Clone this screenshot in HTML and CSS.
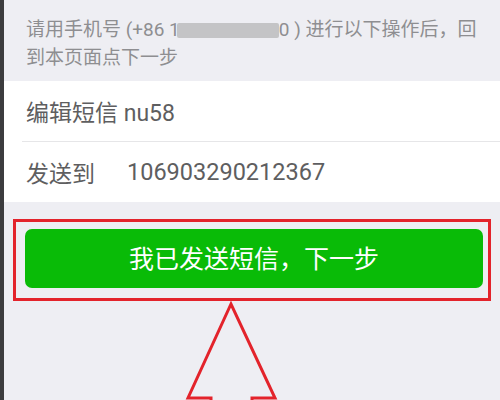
FILE: index.html
```html
<!DOCTYPE html>
<html lang="zh-CN">
<head>
<meta charset="utf-8">
<title>发送短信</title>
<link rel="stylesheet" href="styles.css">
</head>
<body>
<div class="screen">
  <div class="strip"></div>
  <div class="page">
    <div class="notice">请用手机号 (+86 1<span class="masked"></span>0 ) 进行以下操作后，回到本页面点下一步</div>
    <div class="rows">
      <div class="row row-first">编辑短信 nu58</div>
      <div class="row"><span class="label">发送到</span><span class="value">106903290212367</span></div>
    </div>
    <div class="actions">
      <button class="next-btn">我已发送短信，下一步</button>
    </div>
  </div>
  <div class="highlight-box"></div>
  <svg class="arrow" width="500" height="400" viewBox="0 0 500 400">
    <path d="M211 420 L211 398 L188 398 L231 304 L275 398 L252 398 L252 420" fill="none" stroke="#e3232b" stroke-width="3" stroke-linejoin="miter"/>
  </svg>
</div>
</body>
</html>
```
FILE: styles.css
```css
html, body {
  margin: 0;
  padding: 0;
}
body {
  font-family: Roboto, "Noto Sans CJK SC", sans-serif;
  background: #eeeef3;
}
.screen {
  position: relative;
  display: flex;
  width: 500px;
  height: 400px;
  overflow: hidden;
}
.strip {
  width: 4px;
  background: #3c3c3e;
  flex: none;
}
.page {
  flex: 1;
  background: #eeeef3;
  display: flex;
  flex-direction: column;
}
.notice {
  padding: 16px 6px 9px 22px;
  font-size: 19px;
  line-height: 28px;
  color: #8e8e91;
}
.masked {
  display: inline-block;
  width: 102px;
  height: 15px;
  margin-left: -3px;
  background: #c4c4c6;
  vertical-align: -2px;
  border-radius: 2px;
}
.rows {
  background: #ffffff;
  padding-left: 18px;
}
.row {
  height: 60px;
  display: flex;
  align-items: center;
  padding-left: 4px;
  font-size: 23px;
  color: #5e5e60;
}
.row-first {
  border-bottom: 1px solid #e6e6e8;
}
.label {
  width: 101px;
}
.value {
  font-size: 23.5px;
}
.actions {
  padding: 27px 17px 0 21px;
}
.next-btn {
  display: block;
  width: 100%;
  height: 59px;
  border: none;
  border-radius: 7px;
  background: #09bb07;
  color: #ffffff;
  font-family: Roboto, "Noto Sans CJK SC", sans-serif;
  font-size: 25px;
  padding: 0 0 3px;
}
.highlight-box {
  position: absolute;
  left: 13px;
  top: 219px;
  width: 478px;
  height: 82px;
  box-sizing: border-box;
  border: 3px solid #e3232b;
}
.arrow {
  position: absolute;
  left: 0;
  top: 0;
}
```
